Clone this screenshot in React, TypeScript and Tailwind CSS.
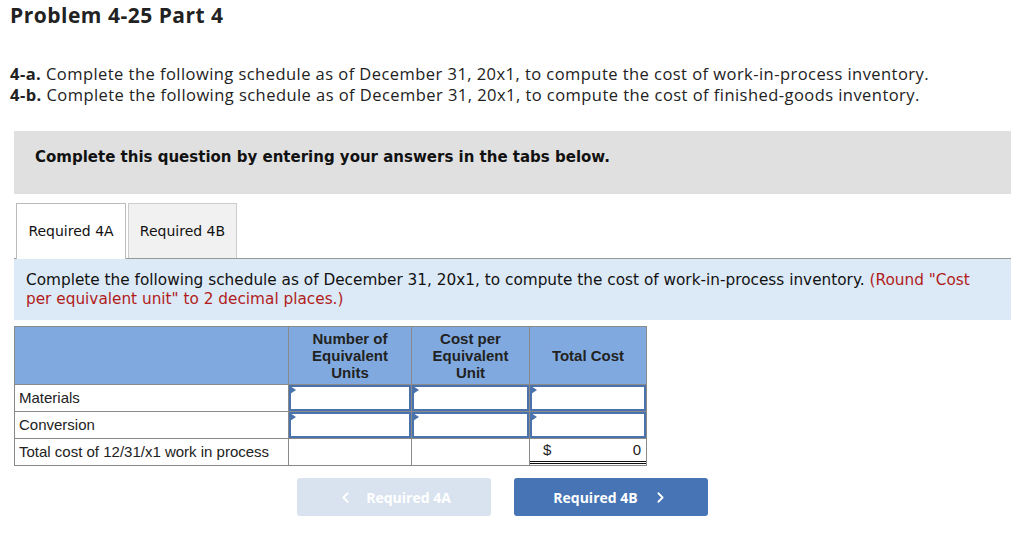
import { ChevronLeft, ChevronRight } from "lucide-react"

const rows = ["Materials", "Conversion"]

function InputCell() {
  return (
    <td className="border border-[#8a8a8a] p-0 h-[27px]">
      <div className="relative h-[26px] border-2 border-[#4a72ad] bg-white">
        <span className="absolute left-[-1px] top-[-1px] w-0 h-0 border-y-[4px] border-y-transparent border-l-[6px] border-l-[#4a72ad]" />
      </div>
    </td>
  )
}

export default function App() {
  return (
    <div className="w-[1024px] h-[538px] bg-white text-[#222] overflow-hidden">
      <h1 className="pl-[10px] pt-[3px] text-[21px] leading-[24px] font-bold text-[#222] font-['Open_Sans',sans-serif] tracking-[0.5px]">
        Problem 4-25 Part 4
      </h1>

      <div className="pl-[10px] mt-[36px] text-[16.5px] leading-[21px] font-['Open_Sans',sans-serif] tracking-[0.45px] text-[#222]">
        <p>
          <span className="font-bold">4-a.</span> Complete the following schedule as of December 31, 20x1, to compute the cost of work-in-process inventory.
        </p>
        <p>
          <span className="font-bold">4-b.</span> Complete the following schedule as of December 31, 20x1, to compute the cost of finished-goods inventory.
        </p>
      </div>

      <div className="ml-[14px] w-[997px] mt-[26px]">
        <div className="h-[63px] bg-[#e0e0e0] pl-[21px] pt-[16px] leading-[20px] font-['DejaVu_Sans',Verdana,sans-serif] font-bold text-[15px] text-[#111]">
          Complete this question by entering your answers in the tabs below.
        </div>

        <div className="mt-[9px] flex items-end border-b border-[#999] pl-[2px]">
          <div className="w-[110px] h-[56px] -mb-px bg-white border border-b-0 border-[#bbb] flex items-center justify-center font-['DejaVu_Sans',Verdana,sans-serif] text-[14px] text-[#111]">
            Required 4A
          </div>
          <div className="ml-[2px] w-[109px] h-[55px] bg-[#f1f1f1] border border-b-0 border-[#ccc] flex items-center justify-center font-['DejaVu_Sans',Verdana,sans-serif] text-[14px] text-[#111]">
            Required 4B
          </div>
        </div>

        <div className="h-[61px] bg-[#dce9f6] pl-[12px] pr-[30px] pt-[12px] font-['DejaVu_Sans',Verdana,sans-serif] text-[15.3px] leading-[19px] text-[#111]">
          Complete the following schedule as of December 31, 20x1, to compute the cost of work-in-process inventory.{" "}
          <span className="text-[#b01c1c]">(Round "Cost per equivalent unit" to 2 decimal places.)</span>
        </div>

        <table className="mt-[6px] border-collapse font-['Liberation_Sans',Arial,sans-serif] text-[15px] text-[#222]">
          <thead>
            <tr className="bg-[#80aadf] h-[58px]">
              <th className="w-[274px] border border-[#8a8a8a]" />
              <th className="w-[123px] border border-[#8a8a8a] font-bold leading-[17px]">
                Number of<br />Equivalent<br />Units
              </th>
              <th className="w-[118px] border border-[#8a8a8a] font-bold leading-[17px]">
                Cost per<br />Equivalent<br />Unit
              </th>
              <th className="w-[117px] border border-[#8a8a8a] font-bold leading-[17px]">
                Total Cost
              </th>
            </tr>
          </thead>
          <tbody>
            {rows.map((r) => (
              <tr key={r} className="h-[27px]">
                <td className="border border-[#8a8a8a] pl-[4px]">{r}</td>
                <InputCell />
                <InputCell />
                <InputCell />
              </tr>
            ))}
            <tr className="h-[27px]">
              <td className="border border-[#8a8a8a] pl-[4px]">Total cost of 12/31/x1 work in process</td>
              <td className="border border-[#8a8a8a]" />
              <td className="border border-[#8a8a8a]" />
              <td className="border border-[#8a8a8a] p-0">
                <div className="flex justify-between items-center h-[24px] pl-[13px] pr-[5px] border-b-[3px] border-double border-[#111]">
                  <span>$</span>
                  <span>0</span>
                </div>
              </td>
            </tr>
          </tbody>
        </table>

        <div className="mt-[12px] ml-[283px] flex gap-[23px] font-['Open_Sans',sans-serif] text-[14px] font-bold text-white">
          <div className="w-[194px] h-[38px] rounded-[3px] bg-[#d9e3ef] flex items-center justify-center gap-[12px]">
            <ChevronLeft size={17} strokeWidth={2.5} />
            <span>Required 4A</span>
          </div>
          <div className="w-[194px] h-[38px] rounded-[3px] bg-[#4674b4] flex items-center justify-center gap-[14px]">
            <span>Required 4B</span>
            <ChevronRight size={17} strokeWidth={2.5} />
          </div>
        </div>
      </div>
    </div>
  )
}
